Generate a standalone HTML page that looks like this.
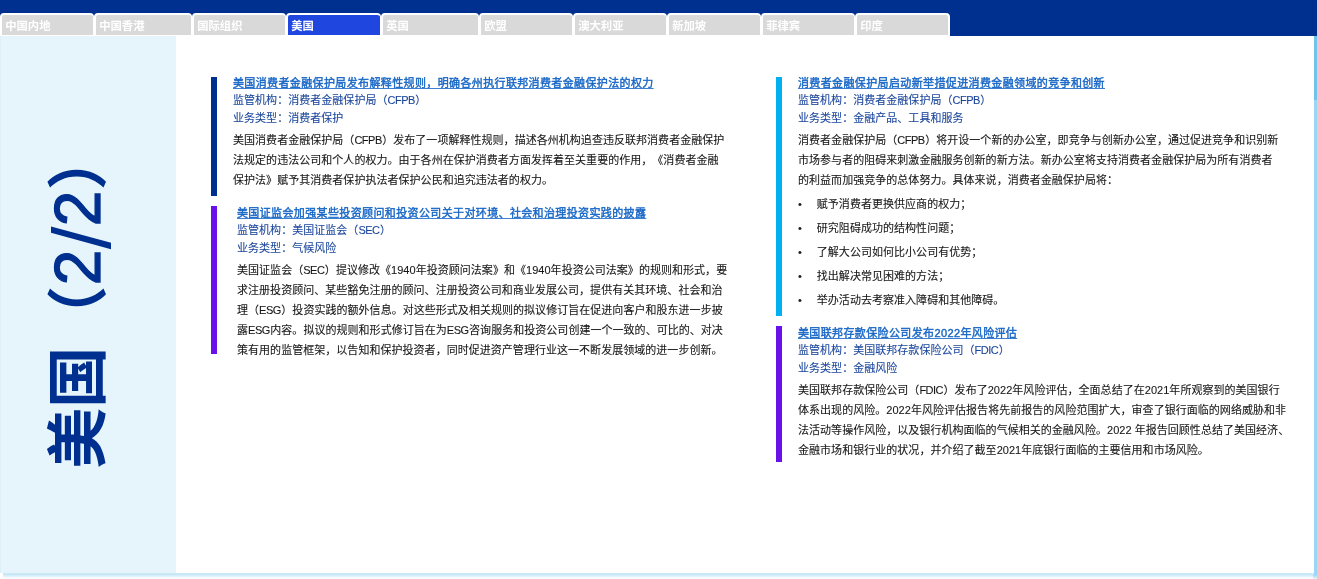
<!DOCTYPE html>
<html lang="zh-CN">
<head>
<meta charset="utf-8">
<title>美国（2/2）</title>
<style>
html,body{margin:0;padding:0;}
body{width:1317px;height:579px;position:relative;overflow:hidden;background:#fff;
  font-family:"Liberation Sans","Noto Sans CJK SC",sans-serif;font-size:11px;color:#1c1c1c;
  text-spacing-trim:space-all;}
.header{position:absolute;left:0;top:0;width:1317px;height:36px;background:#00308f;}
.tab{position:absolute;top:13px;height:23px;box-sizing:border-box;border:solid #fff;border-width:2px 1px 1px 2px;
  border-radius:4px 4px 0 0;background:#d9d9d9;color:#fff;font-size:11.33px;line-height:19px;padding:2.3px 0 0 3.2px;
  font-weight:700;white-space:nowrap;overflow:hidden;will-change:transform;}
.tab.last{border-right-width:2px;}
.tab.active{background:#2046e0;font-weight:700;}
.card{position:absolute;left:0;top:36px;width:1314px;height:537px;background:#fff;}
.side{position:absolute;left:0;top:0;width:176px;height:537px;background:#e6f4fc;box-sizing:border-box;border-left:1px solid #ddf0fa;}
.rs1{position:absolute;left:1313.5px;top:36px;width:4px;height:64px;background:#6fc4ee;box-shadow:-0.5px 0 0.5px #6fc4ee;}
.rs2{position:absolute;left:1313.5px;top:100px;width:4px;height:475px;background:#9ad7f5;box-shadow:-0.5px 0 0.5px #9ad7f5;}
.rs3{position:absolute;left:1313px;top:575px;width:4px;height:4px;background:linear-gradient(to bottom,#9ad7f5,#eaf6fc);}
.bs{position:absolute;left:3px;top:573px;width:1311px;height:6px;background:linear-gradient(to bottom,#cfeaf8 0,#c3e6f7 20%,#e0f2fb 55%,#f6fbfe 80%,#fff 100%);}
.vtitle{margin:0;font-size:11px;font-weight:400;position:absolute;left:77px;top:262.8px;width:0;height:0;}
.vtitle span{position:absolute;left:-200px;top:-40px;width:400px;height:80px;line-height:80px;text-align:center;
  transform:rotate(-90deg);font-size:61px;font-weight:700;color:#00308f;white-space:nowrap;}

.vtitle b{font-size:64px;font-weight:400;-webkit-text-stroke:1.3px #00308f;letter-spacing:.4px;margin-left:.5px;margin-right:0;}
.vtitle i{font-style:normal;font-size:82px;-webkit-text-stroke:0;vertical-align:-10px;line-height:0;}
.bar{position:absolute;width:5.6px;}
.t,.m,.b{position:absolute;white-space:nowrap;will-change:transform;}
.t{font-size:11px;letter-spacing:.37px;font-weight:400;-webkit-text-stroke:.4px currentColor;color:#1766c6;line-height:17px;text-decoration:underline;text-decoration-color:#3d81d2;
  text-decoration-thickness:1px;text-underline-offset:1px;}
.m{letter-spacing:.035px;color:#1a459b;-webkit-text-stroke:.1px currentColor;line-height:17.4px;}
.b{letter-spacing:.035px;-webkit-text-stroke:.1px currentColor;color:#161616;white-space:nowrap;width:500px;line-height:20px;}
.b p{margin:0;}
.l{letter-spacing:-.5px;margin-right:.5px;}
.b ul{margin:1.6px 0 0;padding:0;list-style:none;}
.b li{line-height:24.1px;position:relative;padding-left:18.8px;}
.b li .d{position:absolute;left:0;}

</style>
</head>
<body>
<div class="header"></div>
<nav>
<div class="tab" style="left:0px;width:94px">中国内地</div>
<div class="tab" style="left:94px;width:98px">中国香港</div>
<div class="tab" style="left:192px;width:94px">国际组织</div>
<div class="tab active" style="left:286px;width:95px">美国</div>
<div class="tab" style="left:381px;width:98px">英国</div>
<div class="tab" style="left:479px;width:94px">欧盟</div>
<div class="tab" style="left:573px;width:94px">澳大利亚</div>
<div class="tab" style="left:667px;width:94px">新加坡</div>
<div class="tab" style="left:761px;width:94px">菲律宾</div>
<div class="tab last" style="left:855px;width:95px">印度</div>
</nav>
<div class="bs"></div><div class="rs1"></div><div class="rs2"></div><div class="rs3"></div>
<div class="card"><aside class="side"><h1 class="vtitle"><span>美国（<b>2<i>/</i>2</b>）</span></h1></aside></div>
<main>
<article>
<div class="bar" style="left:211.2px;top:77.0px;height:118.5px;background:#00308f"></div>
<a class="t" style="left:233.1px;top:75.0px">美国消费者金融保护局发布解释性规则，明确各州执行联邦消费者金融保护法的权力</a>
<div class="m" style="left:233.1px;top:92.0px">监管机构：消费者金融保护局（<span class="l">CFPB</span>）</div>
<div class="m" style="left:233.1px;top:110.0px">业务类型：消费者保护</div>
<div class="b" style="left:233.1px;top:130.0px"><p>美国消费者金融保护局（<span class="l">CFPB</span>）发布了一项解释性规则，描述各州机构追查违反联邦消费者金融保护<br>法规定的违法公司和个人的权力。由于各州在保护消费者方面发挥着至关重要的作用，《消费者金融<br>保护法》赋予其消费者保护执法者保护公民和追究违法者的权力。</p></div>
</article>
<article>
<div class="bar" style="left:211.2px;top:206.2px;height:148.1px;background:#6a10e8"></div>
<a class="t" style="left:236.5px;top:205.0px">美国证监会加强某些投资顾问和投资公司关于对环境、社会和治理投资实践的披露</a>
<div class="m" style="left:236.5px;top:222.0px">监管机构：美国证监会（<span class="l">SEC</span>）</div>
<div class="m" style="left:236.5px;top:240.0px">业务类型：气候风险</div>
<div class="b" style="left:236.5px;top:260.0px"><p>美国证监会（<span class="l">SEC</span>）提议修改《1940年投资顾问法案》和《1940年投资公司法案》的规则和形式，要<br>求注册投资顾问、某些豁免注册的顾问、注册投资公司和商业发展公司，提供有关其环境、社会和治<br>理（<span class="l">ESG</span>）投资实践的额外信息。对这些形式及相关规则的拟议修订旨在促进向客户和股东进一步披<br>露<span class="l">ESG</span>内容。拟议的规则和形式修订旨在为<span class="l">ESG</span>咨询服务和投资公司创建一个一致的、可比的、对决<br>策有用的监管框架，以告知和保护投资者，同时促进资产管理行业这一不断发展领域的进一步创新。</p></div>
</article>
<article>
<div class="bar" style="left:776.3px;top:77.0px;height:238.5px;background:#00b0f0"></div>
<a class="t" style="left:798.0px;top:75.0px">消费者金融保护局启动新举措促进消费金融领域的竞争和创新</a>
<div class="m" style="left:798.0px;top:92.0px">监管机构：消费者金融保护局（<span class="l">CFPB</span>）</div>
<div class="m" style="left:798.0px;top:110.0px">业务类型：金融产品、工具和服务</div>
<div class="b" style="left:798.0px;top:130.0px"><p>消费者金融保护局（<span class="l">CFPB</span>）将开设一个新的办公室，即竞争与创新办公室，通过促进竞争和识别新<br>市场参与者的阻碍来刺激金融服务创新的新方法。新办公室将支持消费者金融保护局为所有消费者<br>的利益而加强竞争的总体努力。具体来说，消费者金融保护局将：</p><ul><li><span class="d">•</span>赋予消费者更换供应商的权力；</li><li><span class="d">•</span>研究阻碍成功的结构性问题；</li><li><span class="d">•</span>了解大公司如何比小公司有优势；</li><li><span class="d">•</span>找出解决常见困难的方法；</li><li><span class="d">•</span>举办活动去考察准入障碍和其他障碍。</li></ul></div>
</article>
<article>
<div class="bar" style="left:776.3px;top:326px;height:136px;background:#6a10e8"></div>
<a class="t" style="left:798.0px;top:325.0px">美国联邦存款保险公司发布2022年风险评估</a>
<div class="m" style="left:798.0px;top:342.0px">监管机构：美国联邦存款保险公司（<span class="l">FDIC</span>）</div>
<div class="m" style="left:798.0px;top:360.0px">业务类型：金融风险</div>
<div class="b" style="left:798.0px;top:380.0px"><p>美国联邦存款保险公司（<span class="l">FDIC</span>）发布了2022年风险评估，全面总结了在2021年所观察到的美国银行<br>体系出现的风险。2022年风险评估报告将先前报告的风险范围扩大，审查了银行面临的网络威胁和非<br>法活动等操作风险，以及银行机构面临的气候相关的金融风险。2022 年报告回顾性总结了美国经济、<br>金融市场和银行业的状况，并介绍了截至2021年底银行面临的主要信用和市场风险。</p></div>
</article>
</main>
</body>
</html>
